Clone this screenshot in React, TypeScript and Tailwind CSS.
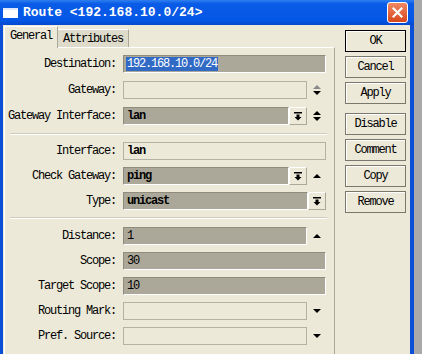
import React from 'react';

type Arrow = 'updown' | 'updown-grey' | 'up' | 'down' | null;

function Triangles({ kind }: { kind: Arrow }) {
  if (!kind) return null;
  const upColor = kind === 'updown-grey' ? '#8a8a8a' : '#000';
  return (
    <svg width="10" height="13" viewBox="0 0 10 13">
      {(kind === 'updown' || kind === 'updown-grey' || kind === 'up') && (
        <polygon points={kind === 'up' ? '1,8 5,4 9,8' : '1,5 5,1 9,5'} fill={upColor} />
      )}
      {(kind === 'updown' || kind === 'updown-grey' || kind === 'down') && (
        <polygon points={kind === 'down' ? '1,4 9,4 5,8' : '1,7 9,7 5,11'} fill="#000" />
      )}
    </svg>
  );
}

function DropIcon() {
  return (
    <svg width="8" height="9" viewBox="0 0 8 9">
      <rect x="0" y="0" width="8" height="1.5" fill="#000" />
      <rect x="2.5" y="2.5" width="3" height="2.5" fill="#000" />
      <polygon points="0.5,5 7.5,5 4,8.5" fill="#000" />
    </svg>
  );
}

type RowProps = {
  label: string;
  value?: string;
  kind: 'grey' | 'light' | 'selected';
  drop?: boolean;
  arrow?: Arrow;
  arrowCol?: boolean;
  plain?: boolean;
};

function Row({ label, value, kind, drop, arrow, arrowCol, plain }: RowProps) {
  const box =
    kind === 'light'
      ? 'bg-[#ece9d8] border border-[#b5b2a3]'
      : 'bg-[#aca899] border-l border-t border-l-[#8f8c7e] border-t-[#8f8c7e] border-r border-b border-r-white border-b-white';
  return (
    <div className="flex items-center h-[18px]">
      <div className="w-[112px] text-right pr-px text-black">{label}</div>
      <div className="ml-[6px] w-[203px] h-full flex">
        <div className={`flex-1 h-full flex items-center pl-[2px] ${box}`}>
          {kind === 'selected' ? (
            <span className="bg-[#316ac5] text-white px-px leading-[14px]">{value}</span>
          ) : (
            <span className={`text-black pl-px ${plain ? '' : 'font-bold'}`}>{value}</span>
          )}
        </div>
        {drop && (
          <div className="w-[18px] h-full flex items-center justify-center bg-[#ece9d8] border border-t-white border-l-white border-r-[#aca899] border-b-[#aca899]">
            <DropIcon />
          </div>
        )}
        {arrowCol && (
          <div className="w-[19px] h-full flex items-center justify-center">
            <Triangles kind={arrow ?? null} />
          </div>
        )}
      </div>
    </div>
  );
}

function Separator() {
  return <div className="ml-[5px] mr-[7px] h-[2px] border-t border-t-[#cfccbc] border-b border-b-white" />;
}

function Btn({ label, primary }: { label: string; primary?: boolean }) {
  return (
    <div
      className={`h-[22px] w-[61px] flex items-center justify-center bg-[#ece9d8] shadow-[inset_1px_1px_0_#fff] border ${
        primary ? 'border-black' : 'border-[#7a786c]'
      }`}
    >
      {label}
    </div>
  );
}

export default function App() {
  return (
    <div
      className="w-[422px] h-[354px] overflow-hidden flex bg-[#a9a9a9] text-[12px] tracking-[-1.2px] text-black"
      style={{ fontFamily: '"Liberation Mono", "Courier New", monospace' }}
    >
      <div className="w-[414px] flex flex-col bg-[#0a4fd8]">
        {/* Title bar */}
        <div className="h-[25px] flex items-center pl-[3px] pr-[6px] bg-[linear-gradient(to_bottom,#2f7ff0_0%,#0a5be6_15%,#0457e6_80%,#0349cf_100%)]">
          <div className="w-[15px] h-[10px] bg-white border-t-2 border-t-[#dfe8fb]" />
          <div className="ml-[5px] text-white font-bold text-[13px] tracking-[0px] leading-none">
            Route &lt;192.168.10.0/24&gt;
          </div>
          <div className="ml-auto w-[21px] h-[21px] rounded-[3px] border border-white bg-[linear-gradient(to_bottom,#f08a64,#d8461b)] flex items-center justify-center">
            <svg width="11" height="11" viewBox="0 0 11 11">
              <path d="M1.5 1.5 L9.5 9.5 M9.5 1.5 L1.5 9.5" stroke="#fff" strokeWidth="2.2" strokeLinecap="square" />
            </svg>
          </div>
        </div>

        {/* Body */}
        <div className="flex-1 flex ml-[3px] mr-[4px] bg-[#ece9d8]">
          <div className="w-[332px] pl-px flex flex-col">
            {/* Tabs */}
            <div className="h-[22px] flex items-end">
              <div className="relative z-10 -mb-px h-[22px] w-[54px] flex items-center justify-center bg-[#ece9d8] border-t border-l border-white border-r border-r-[#aca899] pb-[3px]">
                General
              </div>
              <div className="h-[18px] w-[71px] flex items-center justify-center bg-[#dedbcb] border-t border-r border-t-white border-r-[#aca899]">
                Attributes
              </div>
            </div>

            {/* Panel */}
            <div className="flex-1 border-t border-l border-white border-r border-r-[#aca899] pt-[7px] flex flex-col">
              <div className="flex flex-col gap-[8px]">
                <Row label="Destination:" value="192.168.10.0/24" kind="selected" />
                <Row label="Gateway:" kind="light" arrowCol arrow="updown-grey" />
                <Row label="Gateway Interface:" value="lan" kind="grey" drop arrowCol arrow="updown" />
              </div>
              <div className="mt-[8px] mb-[7px]">
                <Separator />
              </div>
              <div className="flex flex-col gap-[7px]">
                <Row label="Interface:" value="lan" kind="light" />
                <Row label="Check Gateway:" value="ping" kind="grey" drop arrowCol arrow="up" />
                <Row label="Type:" value="unicast" kind="grey" drop />
              </div>
              <div className="mt-[7px] mb-[8px]">
                <Separator />
              </div>
              <div className="flex flex-col gap-[7px]">
                <Row label="Distance:" value="1" kind="grey" arrowCol arrow="up" plain />
                <Row label="Scope:" value="30" kind="grey" plain />
                <Row label="Target Scope:" value="10" kind="grey" plain />
                <Row label="Routing Mark:" kind="light" arrowCol arrow="down" />
                <Row label="Pref. Source:" kind="light" arrowCol arrow="down" />
              </div>
            </div>
          </div>

          {/* Buttons */}
          <div className="ml-[10px] pt-[5px] flex flex-col">
            <div className="flex flex-col gap-[4px]">
              <Btn label="OK" primary />
              <Btn label="Cancel" />
              <Btn label="Apply" />
            </div>
            <div className="mt-[9px] flex flex-col gap-[4px]">
              <Btn label="Disable" />
              <Btn label="Comment" />
              <Btn label="Copy" />
              <Btn label="Remove" />
            </div>
          </div>
        </div>
      </div>
    </div>
  );
}
